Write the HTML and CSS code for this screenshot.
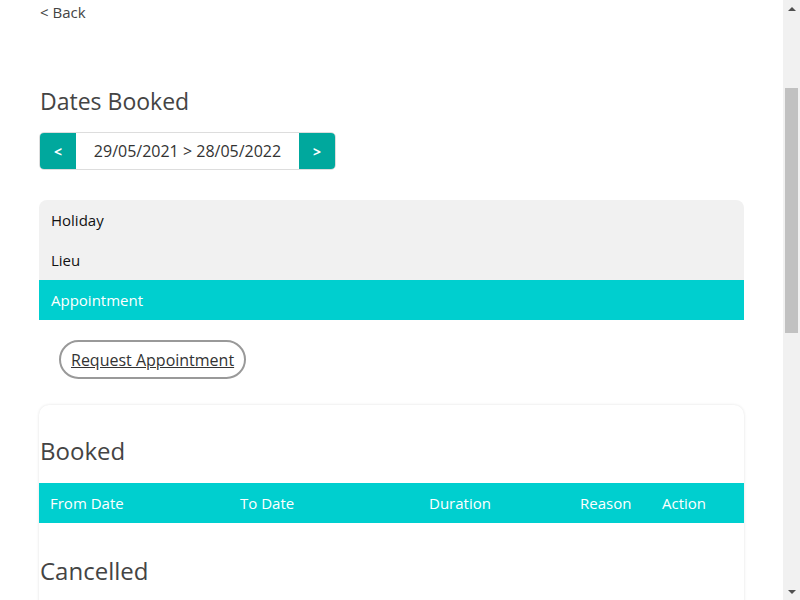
FILE: index.html
```html
<!DOCTYPE html>
<html lang="en">
<head>
<meta charset="utf-8">
<title>Dates Booked</title>
<link rel="stylesheet" href="styles.css">
</head>
<body>
<div class="page">
  <a class="back" href="#">&lt; Back</a>
  <h1 class="title">Dates Booked</h1>
  <div class="range">
    <button class="range-btn">&lt;</button>
    <div class="range-text">29/05/2021 &gt; 28/05/2022</div>
    <button class="range-btn">&gt;</button>
  </div>
  <ul class="tabs">
    <li class="tab">Holiday</li>
    <li class="tab">Lieu</li>
    <li class="tab active">Appointment</li>
  </ul>
  <div class="actions">
    <a class="pill" href="#">Request Appointment</a>
  </div>
  <div class="card">
    <h2 class="section">Booked</h2>
    <div class="thead">
      <span>From Date</span>
      <span>To Date</span>
      <span>Duration</span>
      <span>Reason</span>
      <span>Action</span>
    </div>
    <h2 class="section">Cancelled</h2>
  </div>
</div>
<div class="scrollbar" aria-hidden="true">
  <div class="sb-arrow up"></div>
  <div class="sb-track"><div class="sb-thumb"></div></div>
  <div class="sb-arrow down"></div>
</div>
</body>
</html>
```
FILE: styles.css
```css
* { box-sizing: border-box; }
html, body { margin: 0; padding: 0; background: #fff; }
body {
  font-family: "Open Sans", "Noto Sans", sans-serif;
  color: #333;
  font-size: 15px;
  overflow: hidden;
  height: 600px;
}
.page {
  width: 783px;
  padding: 0 39px 0 39px;
  display: flex;
  flex-direction: column;
  align-items: flex-start;
}
.back {
  color: #444;
  text-decoration: none;
  font-size: 15px;
  line-height: 24px;
  padding-left: 1px;
}
.title {
  margin: 61px 0 0 1px;
  font-size: 23px;
  font-weight: 400;
  color: #444;
  line-height: 32px;
}
.range {
  margin-top: 15px;
  display: flex;
  width: 297px;
  height: 38px;
  border: 1px solid #ddd;
  border-radius: 5px;
  overflow: hidden;
}
.range-btn {
  width: 36px;
  border: 0;
  background: #00a89d;
  color: #fff;
  font-family: inherit;
  font-weight: 700;
  font-size: 14px;
  padding: 0;
}
.range-text {
  flex: 1;
  display: flex;
  align-items: center;
  justify-content: center;
  font-size: 16px;
  color: #333;
}
.tabs {
  list-style: none;
  margin: 30px 0 0 0;
  padding: 0;
  align-self: stretch;
  background: #f1f1f1;
  border-radius: 8px 8px 0 0;
  overflow: hidden;
}
.tab {
  height: 40px;
  display: flex;
  align-items: center;
  padding-left: 12px;
  color: #111;
  font-size: 15px;
}
.tab.active { background: #00cfcf; color: #fff; }
.actions { margin-top: 20px; padding-left: 20px; }
.pill {
  display: inline-flex;
  align-items: center;
  height: 39px;
  padding: 0 10px;
  border: 2px solid #999;
  border-radius: 20px;
  color: #333;
  font-size: 16px;
}
.card {
  margin-top: 26px;
  align-self: stretch;
  border-radius: 10px;
  box-shadow: 0 0 3px rgba(0,0,0,0.12);
  padding: 28px 0 60px 0;
}
.section {
  margin: 0 0 14px 1px;
  font-size: 24px;
  font-weight: 400;
  color: #444;
  line-height: 36px;
}
.thead {
  display: grid;
  grid-template-columns: 190px 189px 151px 82px 1fr;
  height: 40px;
  align-items: center;
  background: #00cfcf;
  color: #fff;
  font-size: 15px;
  padding-left: 11px;
  margin-bottom: 30px;
}
.scrollbar {
  position: fixed;
  top: 0;
  right: 0;
  width: 17px;
  height: 600px;
  background: #f1f1f1;
  display: flex;
  flex-direction: column;
}
.sb-arrow {
  height: 17px;
  display: flex;
  align-items: center;
  justify-content: center;
}
.sb-arrow::before {
  content: "";
  width: 0;
  height: 0;
  border-left: 4px solid transparent;
  border-right: 4px solid transparent;
}
.sb-arrow.up::before { border-bottom: 4px solid #505050; }
.sb-arrow.down::before { border-top: 4px solid #505050; }
.sb-track { flex: 1; padding: 71px 2px 0 2px; }
.sb-thumb { height: 245px; background: #c1c1c1; }
```
